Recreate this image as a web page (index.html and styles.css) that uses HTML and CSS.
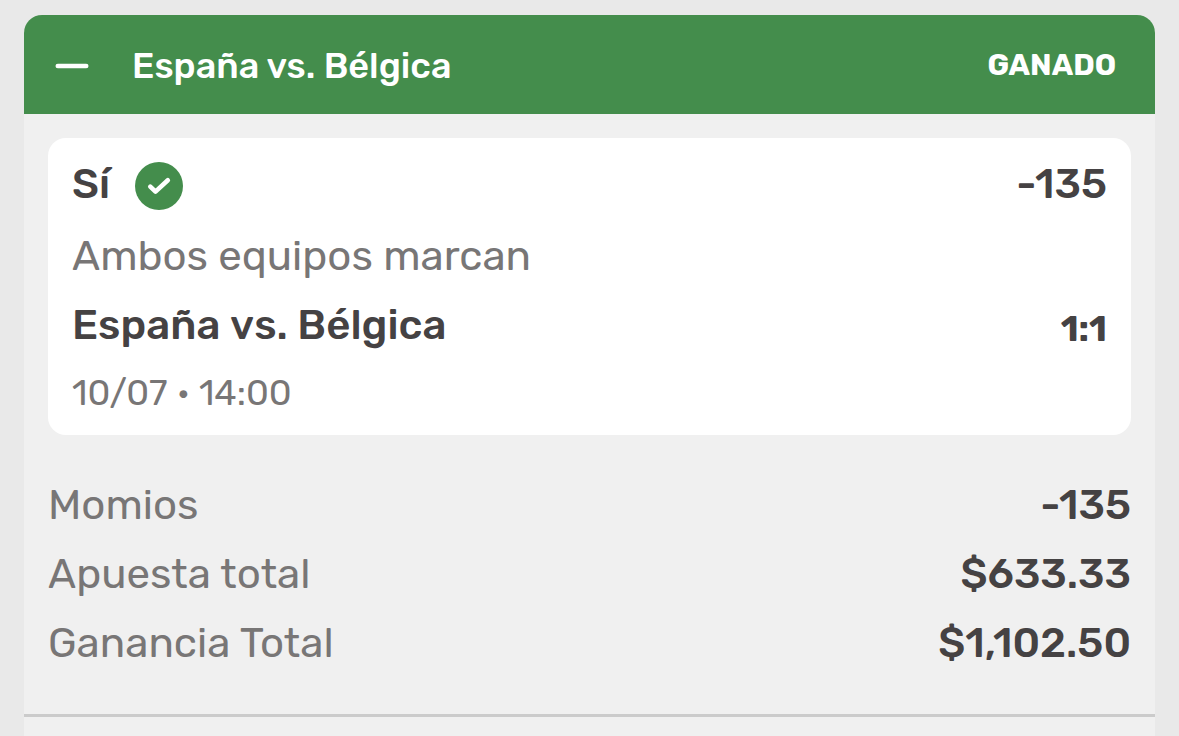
FILE: index.html
```html
<!DOCTYPE html>
<html lang="es">
<head>
<meta charset="utf-8">
<meta name="viewport" content="width=device-width, initial-scale=1">
<title>España vs. Bélgica</title>
<link rel="stylesheet" href="styles.css">
</head>
<body>
<main class="ticket">
  <header class="ticket-header">
    <button class="collapse" type="button" aria-label="Contraer" aria-expanded="true">
      <svg viewBox="0 0 34 6" width="34" height="6" aria-hidden="true"><path d="M2.8 3h28.4" stroke="currentColor" stroke-width="4.6" stroke-linecap="round"/></svg>
    </button>
    <h1 class="ticket-title">España vs. Bélgica</h1>
    <span class="status">GANADO</span>
  </header>
  <section class="selection">
    <div class="row pick-row">
      <span class="pick">Sí
        <svg class="check" viewBox="0 0 48 48" width="48" height="48" role="img" aria-label="Acertada"><circle cx="24" cy="24" r="24" fill="#448d4c"/><path d="M15.3 24.6l5.2 5L32.8 18.3" fill="none" stroke="#fff" stroke-width="4.6" stroke-linecap="round" stroke-linejoin="round"/></svg>
      </span>
      <span class="odds">-135</span>
    </div>
    <p class="market">Ambos equipos marcan</p>
    <div class="row match-row">
      <h2 class="match">España vs. Bélgica</h2>
      <span class="score">1:1</span>
    </div>
    <p class="date">10/07 • 14:00</p>
  </section>
  <dl class="totals">
    <div class="row"><dt>Momios</dt><dd>-135</dd></div>
    <div class="row"><dt>Apuesta total</dt><dd>$633.33</dd></div>
    <div class="row"><dt>Ganancia Total</dt><dd>$1,102.50</dd></div>
  </dl>
</main>
</body>
</html>
```
FILE: styles.css
```css
* { box-sizing: border-box; }
body { display: flex; flex-direction: column; min-height: 100vh; margin: 0; padding: 15px 24px 0; background: #e9e9e9; color: #454243; font-family: Rubik, Roboto, sans-serif; font-size: 42px; }
h1, h2, p, dl, dd { margin: 0; }
.ticket { flex: 1; background: #f0f0f0; border-radius: 18px 18px 0 0; overflow: hidden; }
.ticket-header { display: flex; align-items: center; min-height: 99px; padding: 2px 39px 0 31px; background: #448d4c; color: #fff; }
.collapse { display: flex; padding: 0; border: 0; background: none; color: inherit; margin-right: 43px; }
.ticket-title { flex: 1; font-size: 36px; font-weight: 500; line-height: 44px; }
.status { padding-bottom: 2px; font-size: 30px; font-weight: 700; line-height: 40px; }
.selection { margin: 24px 24px 0; padding: 24px 24px 7px; background: #fff; border-radius: 18px; }
.row { display: flex; justify-content: space-between; align-items: center; }
.pick-row { align-items: flex-start; line-height: 44px; }
.pick { display: flex; align-items: flex-start; gap: 25px; font-weight: 500; }
.odds { font-weight: 500; }
.market { line-height: 72px; margin-top: 10px; color: #787676; }
.match-row { line-height: 66px; }
.match { font-size: 42px; font-weight: 500; font-kerning: none; }
.score { padding-top: 8px; font-size: 36px; font-weight: 700; line-height: 40px; }
.date { font-size: 36px; line-height: 70px; color: #787676; }
.totals { padding: 36px 24px; border-bottom: 3px solid #cbcbcb; line-height: 69px; }
.totals dt { color: #787676; }
.totals dd { font-weight: 500; }
```
